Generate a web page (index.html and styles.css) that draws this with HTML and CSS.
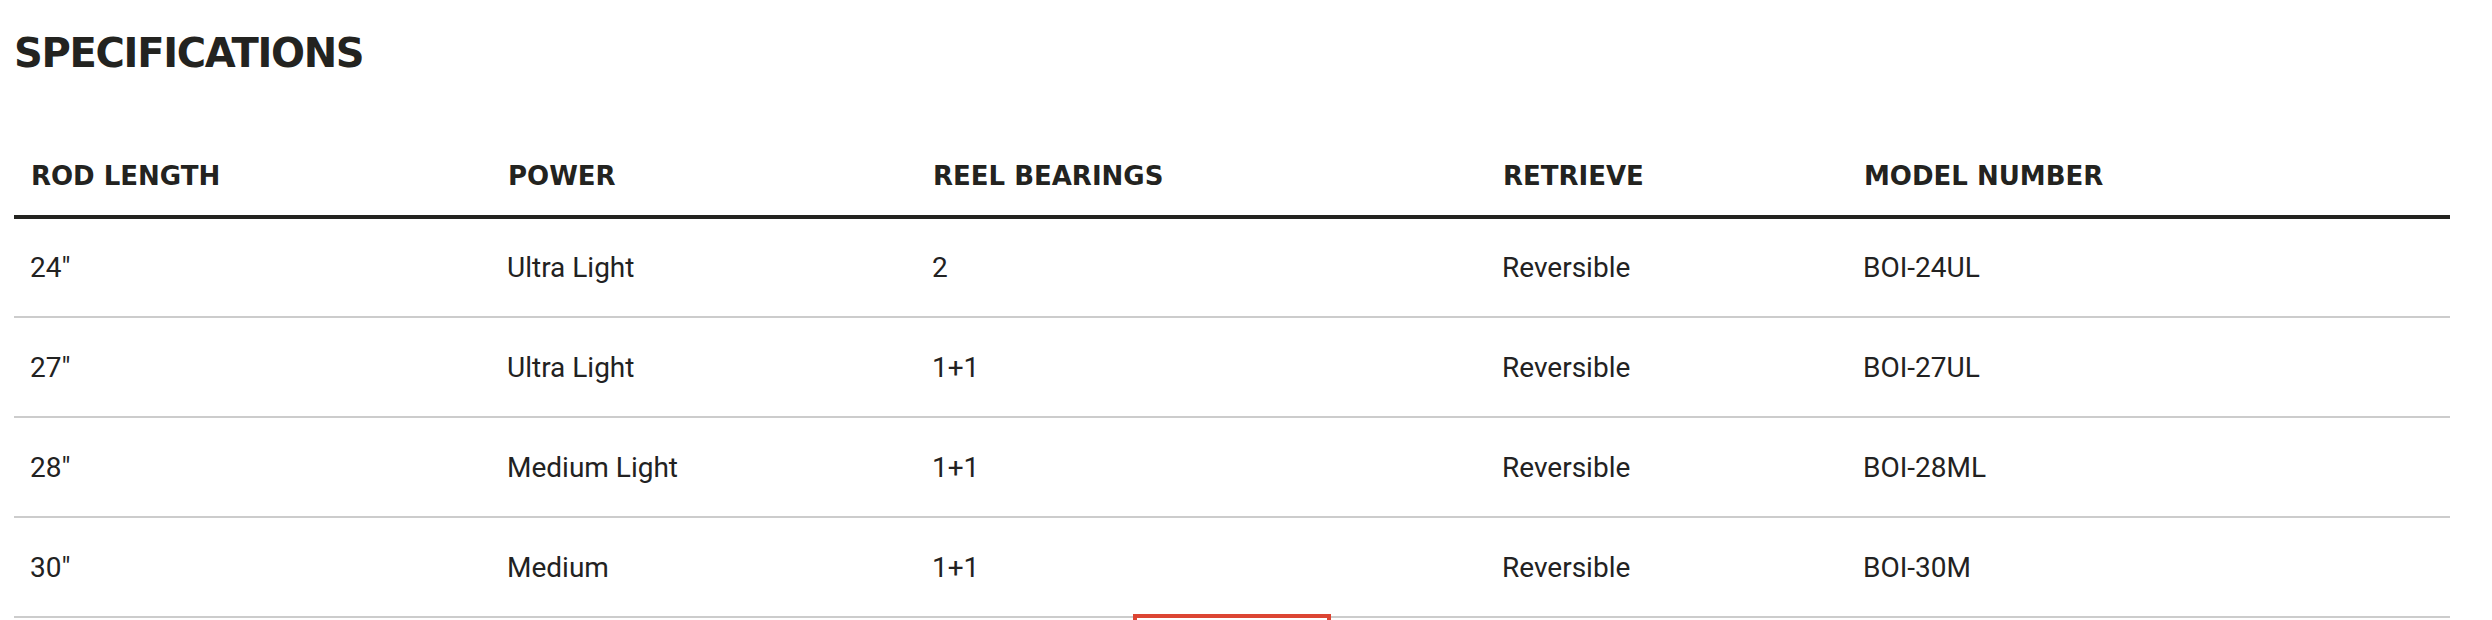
FILE: index.html
```html
<html>

<head>
  <title>Specifications</title>
  <link rel="stylesheet" href="styles.css">
</head>

<body>
  <div class="specs">
    <h2>SPECIFICATIONS</h2>
    <table class="spec_table">
      <colgroup>
        <col class="c1">
        <col class="c2">
        <col class="c3">
        <col class="c4">
        <col class="c5">
      </colgroup>
      <thead>
        <tr>
          <th>ROD LENGTH</th>
          <th>POWER</th>
          <th>REEL BEARINGS</th>
          <th>RETRIEVE</th>
          <th>MODEL NUMBER</th>
        </tr>
      </thead>
      <tbody>
        <tr>
          <td>24"</td>
          <td>Ultra Light</td>
          <td>2</td>
          <td>Reversible</td>
          <td>BOI-24UL</td>
        </tr>
        <tr>
          <td>27"</td>
          <td>Ultra Light</td>
          <td>1+1</td>
          <td>Reversible</td>
          <td>BOI-27UL</td>
        </tr>
        <tr>
          <td>28"</td>
          <td>Medium Light</td>
          <td>1+1</td>
          <td>Reversible</td>
          <td>BOI-28ML</td>
        </tr>
        <tr>
          <td>30"</td>
          <td>Medium</td>
          <td>1+1</td>
          <td>Reversible</td>
          <td>BOI-30M</td>
        </tr>
      </tbody>
    </table>
    <!-- only the top edge of the red outlined button shows in the frame -->
    <div class="more">
      <div class="more_btn"></div>
    </div>
  </div>
</body>

</html>
```

FILE: styles.css
```css
* {
  margin: 0;
  box-sizing: border-box;
}

body {
  background: #fff;
  color: #232320;
  font-family: Roboto, "Liberation Sans", sans-serif;
}

.specs {
  width: 2436px;
  margin-left: 14px;
  padding-top: 29px;
}

.specs h2 {
  font-family: "DejaVu Sans", sans-serif;
  font-weight: bold;
  font-size: 40px;
  line-height: 48px;
  letter-spacing: -1.3px;
  margin-bottom: 60px;
}

.spec_table {
  width: 100%;
  table-layout: fixed;
  border-collapse: collapse;
}

.c1 { width: 477px; }
.c2 { width: 425px; }
.c3 { width: 570px; }
.c4 { width: 361px; }
.c5 { width: 603px; }

.spec_table th {
  font-family: "DejaVu Sans", sans-serif;
  font-weight: bold;
  font-size: 26px;
  letter-spacing: 0;
  text-align: left;
  height: 80px;
  padding: 0 0 0 17px;
  vertical-align: middle;
  border-bottom: 4px solid #232320;
}

.spec_table td {
  font-size: 28px;
  color: #222;
  height: 100px;
  padding: 0 0 0 16px;
  vertical-align: middle;
  border-bottom: 2px solid #cccccc;
}

.more {
  display: flex;
  justify-content: center;
  margin-top: -4px;
}

.more_btn {
  width: 198px;
  height: 60px;
  background: #fff;
  border: 4px solid #dc4533;
}
```
